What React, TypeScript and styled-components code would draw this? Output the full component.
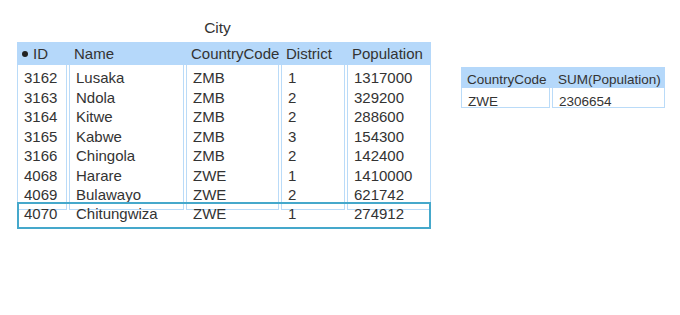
import styled, { createGlobalStyle } from 'styled-components'

const GlobalStyle = createGlobalStyle`
  html, body {
    margin: 0;
    padding: 0;
    background: #ffffff;
  }
  body {
    font-family: 'Liberation Sans', Arial, sans-serif;
    color: #333333;
  }
`

const HEAD_BG = '#b5d8fa'
const LINE = '#badbf8'
const TEAL = '#45a8cb'
const COLS = '50px 115px 93px 64px 1fr'

const Page = styled.div`
  display: flex;
  align-items: flex-start;
  padding: 18px 0 0 17px;
  width: 680px;
  height: 315px;
  box-sizing: border-box;
`

const TableBlock = styled.div`
  width: 414px;
  display: flex;
  flex-direction: column;
`

const Title = styled.div`
  font-size: 15.5px;
  line-height: 20px;
  text-align: center;
  padding-right: 13px;
  margin-bottom: 4px;
`

const HeadRow = styled.div`
  display: grid;
  grid-template-columns: ${COLS};
  column-gap: 2px;
  background: ${HEAD_BG};
  height: 23px;
  box-sizing: border-box;
  padding-top: 2px;
`

const HeadCell = styled.div`
  display: flex;
  align-items: center;
  height: 19.5px;
  padding-left: 5px;
  font-size: 15px;
  line-height: 19.5px;
  white-space: nowrap;
`

const KeyDot = styled.span`
  width: 6px;
  height: 6px;
  border-radius: 50%;
  background: #222;
  margin-right: 5px;
  flex: none;
`

const Body = styled.div`
  display: grid;
  grid-template-columns: ${COLS};
  column-gap: 2px;
`

const Column = styled.div`
  height: 145px;
  box-sizing: border-box;
  border: 1px solid ${LINE};
  border-top: none;
  padding: 3px 0 0 6px;
`

const Cell = styled.div`
  font-size: 15px;
  line-height: 19.5px;
  white-space: nowrap;
`

const SelectedRow = styled.div`
  display: grid;
  grid-template-columns: ${COLS};
  column-gap: 2px;
  margin-top: -8px;
  border: 2px solid ${TEAL};
  padding-bottom: 3.5px;
  position: relative;
`

const SelectedCell = styled(Cell)`
  padding-left: 5px;
`

const Result = styled.div`
  margin: 49px 0 0 30px;
  width: 204px;
`

const ResultHead = styled.div<{ $cols: string }>`
  display: grid;
  grid-template-columns: ${({ $cols }) => $cols};
  column-gap: 2px;
  background: ${HEAD_BG};
  height: 21px;
  box-sizing: border-box;
  padding-top: 4px;
`

const ResultRow = styled.div<{ $cols: string }>`
  display: grid;
  grid-template-columns: ${({ $cols }) => $cols};
  column-gap: 2px;
`

const ResultHeadCell = styled.div`
  font-size: 13.5px;
  line-height: 17px;
  padding-left: 6px;
  white-space: nowrap;
`

const ResultCell = styled.div`
  height: 20px;
  box-sizing: border-box;
  border: 1px solid ${LINE};
  border-top: none;
  padding: 6px 0 0 6px;
  font-size: 13.5px;
  line-height: 15px;
  white-space: nowrap;
`

const headers = ['ID', 'Name', 'CountryCode', 'District', 'Population']

const rows: string[][] = [
  ['3162', 'Lusaka', 'ZMB', '1', '1317000'],
  ['3163', 'Ndola', 'ZMB', '2', '329200'],
  ['3164', 'Kitwe', 'ZMB', '2', '288600'],
  ['3165', 'Kabwe', 'ZMB', '3', '154300'],
  ['3166', 'Chingola', 'ZMB', '2', '142400'],
  ['4068', 'Harare', 'ZWE', '1', '1410000'],
  ['4069', 'Bulawayo', 'ZWE', '2', '621742'],
]

const selected = ['4070', 'Chitungwiza', 'ZWE', '1', '274912']

const resultCols = '89px 1fr'

const App = () => {
  return (
    <>
      <GlobalStyle />
      <Page>
        <TableBlock>
          <Title>City</Title>
          <HeadRow>
            {headers.map((h, i) => (
              <HeadCell key={h}>
                {i === 0 && <KeyDot />}
                {h}
              </HeadCell>
            ))}
          </HeadRow>
          <Body>
            {headers.map((h, colIndex) => (
              <Column key={`c-${h}`}>
                {rows.map((row, rowIndex) => (
                  <Cell key={`${rowIndex}-${colIndex}`}>{row[colIndex]}</Cell>
                ))}
              </Column>
            ))}
          </Body>
          <SelectedRow>
            {selected.map((v, i) => (
              <SelectedCell key={`s-${i}`}>{v}</SelectedCell>
            ))}
          </SelectedRow>
        </TableBlock>

        <Result>
          <ResultHead $cols={resultCols}>
            <ResultHeadCell>CountryCode</ResultHeadCell>
            <ResultHeadCell>SUM(Population)</ResultHeadCell>
          </ResultHead>
          <ResultRow $cols={resultCols}>
            <ResultCell>ZWE</ResultCell>
            <ResultCell>2306654</ResultCell>
          </ResultRow>
        </Result>
      </Page>
    </>
  )
}

export default App
